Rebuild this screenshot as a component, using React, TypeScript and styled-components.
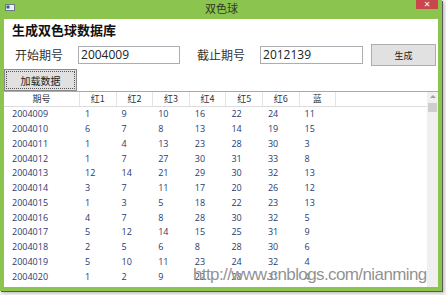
import styled, { createGlobalStyle } from "styled-components"

const GlobalStyle = createGlobalStyle`
    body {
        margin: 0;
        background: #f3f3f3;
        font-family: "Noto Sans CJK SC", sans-serif;
    }
`

const Screen = styled.div`
    position: relative;
    width: 446px;
    height: 295px;
    overflow: hidden;
`

const Window = styled.div`
    width: 442px;
    height: 291px;
    background: #8cc450;
    box-shadow: 1px 1px 0 #5a5a5a, 2px 2px 3px rgba(0, 0, 0, 0.25);
    display: flex;
    flex-direction: column;
    padding: 0 4px 4px 4px;
    box-sizing: border-box;
`

const TitleBar = styled.div`
    position: relative;
    height: 19px;
    flex-shrink: 0;
    display: flex;
    align-items: center;
    justify-content: center;
`

const AppIcon = styled.svg`
    position: absolute;
    left: 1px;
    top: 4px;
`

const Title = styled.span`
    font-size: 11px;
    color: #2f3a24;
    line-height: 1;
    margin-top: -3px;
    margin-left: 1px;
`

const CloseButton = styled.div`
    position: absolute;
    right: 0;
    top: 0;
    width: 22px;
    height: 9px;
    background: #c9474a;
    color: #fff;
    font-family: "DejaVu Sans", sans-serif;
    font-size: 8px;
    line-height: 9px;
    text-align: center;
`

const Content = styled.div`
    flex: 1;
    background: #fff;
    display: flex;
    flex-direction: column;
    overflow: hidden;
`

const Heading = styled.h1`
    margin: 0;
    padding: 0 8px;
    font-size: 13px;
    font-weight: bold;
    line-height: 22px;
    color: #111;
`

const FormRow = styled.div`
    display: flex;
    align-items: center;
    height: 22px;
    margin-top: 3px;
`

const Label = styled.span<{ $left: number }>`
    margin-left: ${p => p.$left}px;
    font-size: 12px;
    color: #333;
    line-height: 1;
`

const Input = styled.div<{ $width: number }>`
    margin-left: 15px;
    width: ${p => p.$width}px;
    height: 18px;
    box-sizing: border-box;
    border: 1px solid #abadb3;
    padding-left: 2px;
    font-family: "Open Sans", sans-serif;
    font-size: 12px;
    line-height: 16px;
    color: #222;
`

const Button = styled.div`
    background: #e1e1e1;
    border: 1px solid #adadad;
    box-sizing: border-box;
    display: flex;
    align-items: center;
    justify-content: center;
    color: #222;
`

const GenerateButton = styled(Button)`
    margin-left: 8px;
    width: 65px;
    height: 22px;
    font-size: 9px;
`

const LoadButton = styled(Button)`
    margin-top: 3px;
    width: 73px;
    height: 22px;
    font-size: 10px;
    border-color: #8a8a8a;
    outline: 1px dotted #555;
    outline-offset: -3px;
`

const Grid = styled.div`
    flex: 1;
    display: flex;
    border-top: 1px solid #a9a9a9;
    overflow: hidden;
`

const Table = styled.div`
    flex: 1;
    overflow: hidden;
`

const HeaderRow = styled.div`
    display: grid;
    grid-template-columns: 76px repeat(7, 36.6px);
    height: 14px;
    border-bottom: 1px solid #dcdcdc;
`

const HeaderCell = styled.div`
    border-right: 1px solid #e4e4e4;
    font-size: 9px;
    color: #333;
    text-align: center;
    line-height: 13px;
`

const DataRow = styled.div`
    display: grid;
    grid-template-columns: 76px repeat(7, 36.6px);
    height: 14.75px;
    align-items: center;
`

const Cell = styled.div<{ $first?: boolean }>`
    padding-left: ${p => (p.$first ? 8 : 5)}px;
    font-family: "Open Sans", sans-serif;
    font-size: 9px;
    line-height: 14px;
    color: #2a3970;
`

const ScrollBar = styled.div`
    width: 11px;
    background: #f0f0f0;
    display: flex;
    flex-direction: column;
    align-items: center;
`

const ScrollArrow = styled.div`
    margin-top: 3px;
    width: 0;
    height: 0;
    border-left: 3px solid transparent;
    border-right: 3px solid transparent;
    border-bottom: 3px solid #a0a0a0;
`

const ScrollThumb = styled.div`
    margin-top: 5px;
    width: 9px;
    height: 9px;
    background: #cdcdcd;
`

const Watermark = styled.div`
    position: absolute;
    left: 193px;
    top: 265px;
    font-family: "Liberation Sans", sans-serif;
    font-size: 17px;
    letter-spacing: -0.6px;
    color: rgba(125, 125, 125, 0.85);
    text-shadow: 0 0 1px rgba(255, 255, 255, 0.8);
`

const headers = ["期号", "红1", "红2", "红3", "红4", "红5", "红6", "蓝"]

const rows: (string | number)[][] = [
    ["2004009", 1, 9, 10, 16, 22, 24, 11],
    ["2004010", 6, 7, 8, 13, 14, 19, 15],
    ["2004011", 1, 4, 13, 23, 28, 30, 3],
    ["2004012", 1, 7, 27, 30, 31, 33, 8],
    ["2004013", 12, 14, 21, 29, 30, 32, 13],
    ["2004014", 3, 7, 11, 17, 20, 26, 12],
    ["2004015", 1, 3, 5, 18, 22, 23, 13],
    ["2004016", 4, 7, 8, 28, 30, 32, 5],
    ["2004017", 5, 12, 14, 15, 25, 31, 9],
    ["2004018", 2, 5, 6, 8, 28, 30, 6],
    ["2004019", 5, 10, 11, 23, 24, 32, 4],
    ["2004020", 1, 2, 9, 22, 28, 31, 4],
    ["2004021", 3, 6, 14, 15, 21, 23, 7],
]

export default function App() {
    return (
        <Screen>
            <GlobalStyle />
            <Window>
                <TitleBar>
                    <AppIcon width="10" height="7" viewBox="0 0 10 7">
                        <rect x="0.5" y="0.5" width="9" height="6" fill="#eef2f5" stroke="#6b7a86" />
                        <rect x="1.5" y="1.5" width="3" height="3" fill="#3d5a80" />
                    </AppIcon>
                    <Title>双色球</Title>
                    <CloseButton>✕</CloseButton>
                </TitleBar>
                <Content>
                    <Heading>生成双色球数据库</Heading>
                    <FormRow>
                        <Label $left={11}>开始期号</Label>
                        <Input $width={102}>2004009</Input>
                        <Label $left={17}>截止期号</Label>
                        <Input $width={103}>2012139</Input>
                        <GenerateButton>生成</GenerateButton>
                    </FormRow>
                    <LoadButton>加载数据</LoadButton>
                    <Grid>
                        <Table>
                            <HeaderRow>
                                {headers.map(h => (
                                    <HeaderCell key={h}>{h}</HeaderCell>
                                ))}
                            </HeaderRow>
                            {rows.map(r => (
                                <DataRow key={r[0]}>
                                    {r.map((v, i) => (
                                        <Cell key={i} $first={i === 0}>{v}</Cell>
                                    ))}
                                </DataRow>
                            ))}
                        </Table>
                        <ScrollBar>
                            <ScrollArrow />
                            <ScrollThumb />
                        </ScrollBar>
                    </Grid>
                </Content>
            </Window>
            <Watermark>http://www.cnblogs.com/nianming</Watermark>
        </Screen>
    )
}
